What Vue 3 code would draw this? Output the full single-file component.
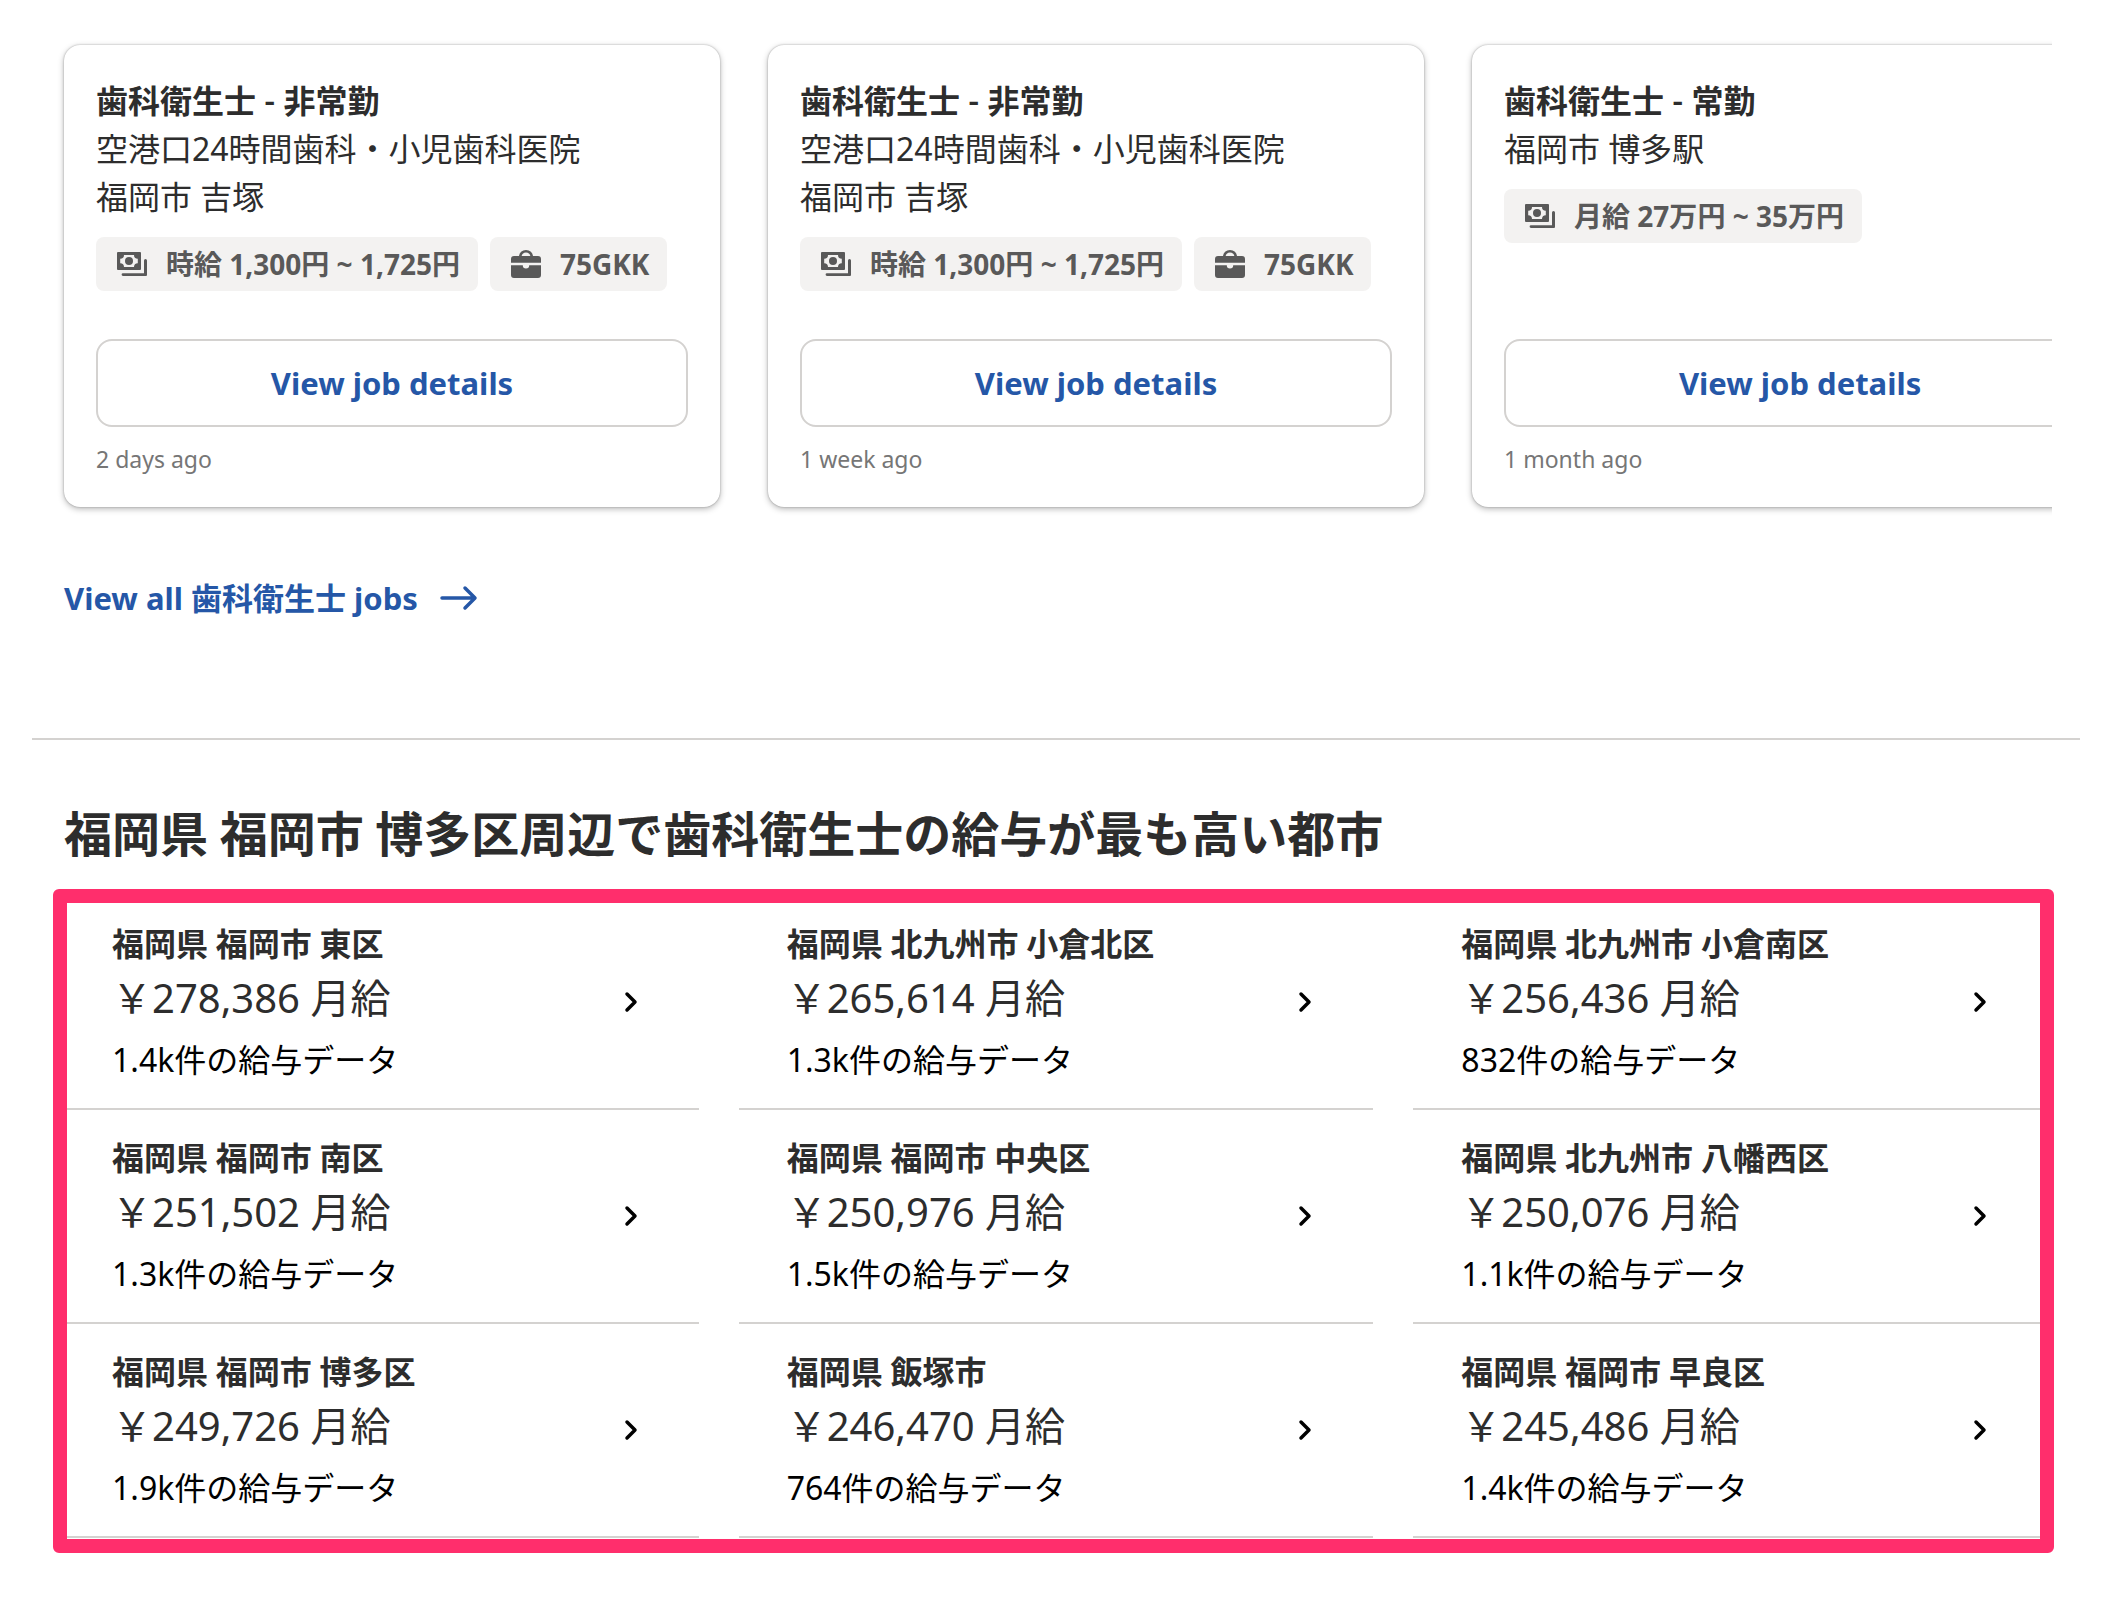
<script setup>
const jobs = [
  {
    title: '歯科衛生士 - 非常勤',
    clinic: '空港口24時間歯科・小児歯科医院',
    place: '福岡市 吉塚',
    tags: [
      { icon: 'money', text: '時給 1,300円 ~ 1,725円' },
      { icon: 'case', text: '75GKK' },
    ],
    age: '2 days ago',
  },
  {
    title: '歯科衛生士 - 非常勤',
    clinic: '空港口24時間歯科・小児歯科医院',
    place: '福岡市 吉塚',
    tags: [
      { icon: 'money', text: '時給 1,300円 ~ 1,725円' },
      { icon: 'case', text: '75GKK' },
    ],
    age: '1 week ago',
  },
  {
    title: '歯科衛生士 - 常勤',
    clinic: '',
    place: '福岡市 博多駅',
    tags: [{ icon: 'money', text: '月給 27万円 ~ 35万円' }],
    age: '1 month ago',
  },
]

const cities = [
  { name: '福岡県 福岡市 東区', pay: '￥278,386 月給', data: '1.4k件の給与データ' },
  { name: '福岡県 北九州市 小倉北区', pay: '￥265,614 月給', data: '1.3k件の給与データ' },
  { name: '福岡県 北九州市 小倉南区', pay: '￥256,436 月給', data: '832件の給与データ' },
  { name: '福岡県 福岡市 南区', pay: '￥251,502 月給', data: '1.3k件の給与データ' },
  { name: '福岡県 福岡市 中央区', pay: '￥250,976 月給', data: '1.5k件の給与データ' },
  { name: '福岡県 北九州市 八幡西区', pay: '￥250,076 月給', data: '1.1k件の給与データ' },
  { name: '福岡県 福岡市 博多区', pay: '￥249,726 月給', data: '1.9k件の給与データ' },
  { name: '福岡県 飯塚市', pay: '￥246,470 月給', data: '764件の給与データ' },
  { name: '福岡県 福岡市 早良区', pay: '￥245,486 月給', data: '1.4k件の給与データ' },
]
</script>

<template>
  <main class="page" lang="ja">
    <section class="jobs">
      <div class="carousel">
        <article v-for="(job, i) in jobs" :key="i" class="card">
          <h3 class="card-title">{{ job.title }}</h3>
          <p v-if="job.clinic">{{ job.clinic }}</p>
          <p class="place">{{ job.place }}</p>
          <ul class="tags">
            <li v-for="tag in job.tags" :key="tag.text" class="tag">
              <svg v-if="tag.icon === 'money'" class="tag-icon" viewBox="0 0 36 36" aria-hidden="true">
                <path
                  fill="currentColor"
                  fill-rule="evenodd"
                  d="M4 6h22a1 1 0 0 1 1 1v16a1 1 0 0 1-1 1H4a1 1 0 0 1-1-1V7a1 1 0 0 1 1-1zM10 9a3.8 3.8 0 0 1-3.8 3.8v4.4A3.8 3.8 0 0 1 10 21h10a3.8 3.8 0 0 1 3.8-3.8v-4.4A3.8 3.8 0 0 1 20 9z"
                />
                <circle cx="15" cy="15" r="4" fill="currentColor" />
                <path fill="currentColor" d="M30 14.500a1.500 1.500 0 0 1 3 0V29a1 1 0 0 1-1 1H9a1.400 1.400 0 0 1 0-2.800h21z" />
              </svg>
              <svg v-else class="tag-icon" viewBox="0 0 36 36" aria-hidden="true">
                <path fill="none" stroke="currentColor" stroke-width="2.600" d="M12.300 12v-1.500a5.700 5.200 0 0 1 11.400 0V12" />
                <path
                  fill="currentColor"
                  d="M6 10h24a3 3 0 0 1 3 3v3.700H3V13a3 3 0 0 1 3-3zM3 19.200h11.800a3.200 3.200 0 0 0 6.400 0H33V29a3 3 0 0 1-3 3H6a3 3 0 0 1-3-3z"
                />
              </svg>
              <span>{{ tag.text }}</span>
            </li>
          </ul>
          <button type="button" class="details">View job details</button>
          <p class="age">{{ job.age }}</p>
        </article>
      </div>
      <a href="#" class="view-all">
        <span>View all 歯科衛生士 jobs</span>
        <svg class="arrow" viewBox="0 0 40 32" aria-hidden="true">
          <path d="M4 16h32M27 6l10 10-10 10" fill="none" stroke="currentColor" stroke-width="3.500" stroke-linecap="round" stroke-linejoin="round" />
        </svg>
      </a>
    </section>

    <section class="cities">
      <h2 class="heading">福岡県 福岡市 博多区周辺で歯科衛生士の給与が最も高い都市</h2>
      <div class="grid-wrap">
        <ul class="grid">
          <li v-for="city in cities" :key="city.name" class="cell">
            <a href="#" class="cell-link">
              <span class="cell-body">
                <span class="name">{{ city.name }}</span>
                <span class="pay">{{ city.pay }}</span>
                <span class="data">{{ city.data }}</span>
              </span>
              <svg class="chevron" viewBox="0 0 36 36" aria-hidden="true">
                <path d="M12 10l8 8-8 8" fill="none" stroke="currentColor" stroke-width="3.500" stroke-linecap="round" stroke-linejoin="round" />
              </svg>
            </a>
          </li>
        </ul>
        <div class="highlight"></div>
      </div>
    </section>
  </main>
</template>

<style>
body {
  background: #ffffff;
}
</style>

<style scoped>
.page {
  padding: 0 36px 64px 32px;
  color: #2d2d2d;
  font-family: "Noto Sans", "Noto Sans CJK JP", sans-serif;
  font-size: 32px;
  line-height: 48px;
}
h2,
h3,
p,
ul {
  margin: 0;
  padding: 0;
  list-style: none;
}
.jobs {
  padding: 0 28px 116px 32px;
  border-bottom: 2px solid #d4d2d0;
}
.carousel {
  display: flex;
  gap: 48px;
  margin-left: -8px;
  padding: 45px 0 27px 8px;
  overflow: hidden;
}
.card {
  flex: 0 0 33%;
  box-sizing: border-box;
  display: flex;
  flex-direction: column;
  padding: 32px;
  border-radius: 16px;
  background: #ffffff;
  box-shadow: 0 0 2px rgba(0, 0, 0, 0.3), 0 2px 6px rgba(0, 0, 0, 0.28);
}
.card-title,
.place,
.name,
.heading {
  font-family: Lato, "Noto Sans CJK JP", sans-serif;
}
.card-title,
.name,
.heading {
  font-weight: 700;
}
.card-title {
  font-size: 32px;
}
.tags {
  display: flex;
  gap: 12px;
  margin: 16px 0 48px;
}
.tag {
  display: flex;
  align-items: center;
  gap: 16px;
  height: 54px;
  padding: 0 18px;
  border-radius: 8px;
  background: #f3f2f1;
  color: #595959;
  font-size: 28px;
  font-weight: 700;
  white-space: nowrap;
}
.tag-icon {
  width: 36px;
  height: 36px;
}
.details {
  height: 88px;
  margin-top: auto;
  border: 2px solid #d4d2d0;
  border-radius: 16px;
  background: #ffffff;
  color: #2557a7;
  font-family: inherit;
  font-size: 31px;
  font-weight: 700;
}
.age {
  margin-top: 16px;
  color: #767676;
  font-size: 23px;
  line-height: 32px;
}
.view-all {
  display: inline-flex;
  align-items: center;
  gap: 20px;
  margin-top: 40px;
  color: #2557a7;
  font-size: 31px;
  font-weight: 700;
  text-decoration: none;
}
.arrow {
  width: 40px;
  height: 32px;
}
.cities {
  padding: 64px 32px 0;
}
.heading {
  font-size: 48px;
  line-height: 60px;
}
.grid-wrap {
  position: relative;
  margin-top: 32px;
}
.grid {
  display: grid;
  grid-template-columns: repeat(3, 1fr);
  column-gap: 40px;
}
.cell {
  border-bottom: 2px solid #d4d2d0;
}
.cell-link {
  display: flex;
  align-items: center;
  justify-content: space-between;
  padding: 24px 48px;
  color: #000000;
  text-decoration: none;
}
.cell-body {
  display: flex;
  flex-direction: column;
}
.name,
.pay {
  color: #2d2d2d;
}
.pay {
  font-size: 40px;
  line-height: 60px;
}
.data {
  margin-top: 8px;
}
.chevron {
  width: 36px;
  height: 36px;
}
.highlight {
  position: absolute;
  inset: -7px -6px -15px -11px;
  border: 14px solid #ff2e6c;
  border-radius: 6px;
  pointer-events: none;
}
</style>
